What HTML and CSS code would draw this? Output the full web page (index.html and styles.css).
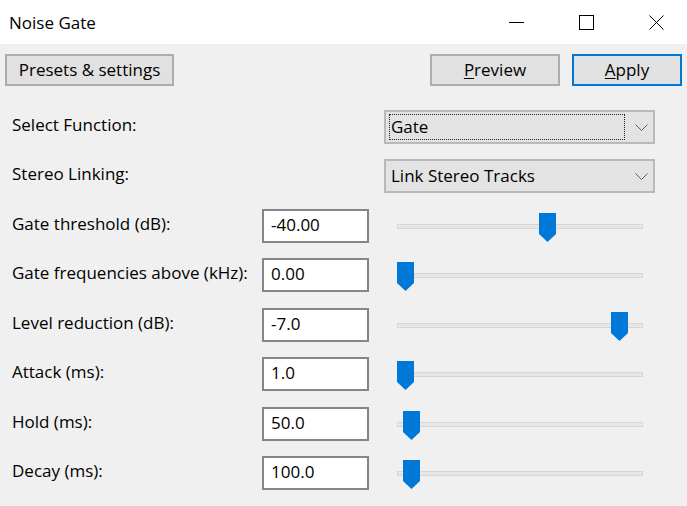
FILE: index.html
```html
<!DOCTYPE html>
<html lang="en">
<head>
<meta charset="utf-8">
<title>Noise Gate</title>
<link rel="stylesheet" href="styles.css">
</head>
<body>
<div class="window">
  <header class="titlebar">
    <span class="title">Noise Gate</span>
    <div class="caption">
      <svg class="cap-icon" width="15" height="15" viewBox="0 0 15 15"><line x1="0" y1="7.5" x2="15" y2="7.5" stroke="#000" stroke-width="1"/></svg>
      <svg class="cap-icon" width="15" height="15" viewBox="0 0 15 15"><rect x="0.5" y="0.5" width="14" height="14" fill="none" stroke="#000" stroke-width="1"/></svg>
      <svg class="cap-icon" width="15" height="15" viewBox="0 0 15 15"><path d="M0.5 0.5 L14.5 14.5 M14.5 0.5 L0.5 14.5" fill="none" stroke="#000" stroke-width="1"/></svg>
    </div>
  </header>

  <div class="toolbar">
    <div class="btn btn-presets">Presets &amp; settings</div>
    <div class="spacer"></div>
    <div class="btn btn-preview"><u>P</u>review</div>
    <div class="btn btn-apply"><u>A</u>pply</div>
  </div>

  <div class="form">
    <div class="lbl">Select Function:</div>
    <div class="combo">
      <span class="combo-value focused">Gate</span>
      <svg class="chev" width="13" height="7" viewBox="0 0 13 7"><polyline points="0.5,0.5 6.5,6.5 12.5,0.5" fill="none" stroke="#606060" stroke-width="1"/></svg>
    </div>

    <div class="lbl">Stereo Linking:</div>
    <div class="combo">
      <span class="combo-value">Link Stereo Tracks</span>
      <svg class="chev" width="13" height="7" viewBox="0 0 13 7"><polyline points="0.5,0.5 6.5,6.5 12.5,0.5" fill="none" stroke="#606060" stroke-width="1"/></svg>
    </div>

    <div class="lbl">Gate threshold (dB):</div>
    <div class="edit">-40.00</div>
    <div class="slider"><div class="track"></div><svg class="thumb" style="left:142px" width="17" height="29" viewBox="0 0 17 29"><path d="M0 0 H17 V21 L8.5 29 L0 21 Z" fill="#0078d7"/></svg></div>

    <div class="lbl">Gate frequencies above (kHz):</div>
    <div class="edit">0.00</div>
    <div class="slider"><div class="track"></div><svg class="thumb" style="left:0px" width="17" height="29" viewBox="0 0 17 29"><path d="M0 0 H17 V21 L8.5 29 L0 21 Z" fill="#0078d7"/></svg></div>

    <div class="lbl">Level reduction (dB):</div>
    <div class="edit">-7.0</div>
    <div class="slider"><div class="track"></div><svg class="thumb" style="left:214px" width="17" height="29" viewBox="0 0 17 29"><path d="M0 0 H17 V21 L8.5 29 L0 21 Z" fill="#0078d7"/></svg></div>

    <div class="lbl">Attack (ms):</div>
    <div class="edit">1.0</div>
    <div class="slider"><div class="track"></div><svg class="thumb" style="left:0px" width="17" height="29" viewBox="0 0 17 29"><path d="M0 0 H17 V21 L8.5 29 L0 21 Z" fill="#0078d7"/></svg></div>

    <div class="lbl">Hold (ms):</div>
    <div class="edit">50.0</div>
    <div class="slider"><div class="track"></div><svg class="thumb" style="left:6px" width="17" height="29" viewBox="0 0 17 29"><path d="M0 0 H17 V21 L8.5 29 L0 21 Z" fill="#0078d7"/></svg></div>

    <div class="lbl">Decay (ms):</div>
    <div class="edit">100.0</div>
    <div class="slider"><div class="track"></div><svg class="thumb" style="left:6px" width="17" height="29" viewBox="0 0 17 29"><path d="M0 0 H17 V21 L8.5 29 L0 21 Z" fill="#0078d7"/></svg></div>
  </div>
</div>
</body>
</html>
```

FILE: styles.css
```css
* { box-sizing: border-box; }

html, body {
  margin: 0;
  padding: 0;
  background: #f0f0f0;
}

body {
  font-family: "Open Sans", "Noto Sans", sans-serif;
  font-size: 17px;
  color: #000;
}

.window {
  width: 687px;
  height: 506px;
  overflow: hidden;
}

.titlebar {
  height: 44px;
  background: #fff;
  display: flex;
  align-items: center;
  justify-content: space-between;
  padding-left: 9px;
}

.title {
  line-height: 20px;
  padding-top: 1px;
}

.caption {
  display: flex;
  align-items: center;
  gap: 55px;
  padding-right: 23px;
}

.cap-icon {
  display: block;
}

.toolbar {
  display: flex;
  padding: 10px 5px 0 5px;
  gap: 12px;
}

.spacer { flex: 1; }

.btn {
  height: 32px;
  background: #e1e1e1;
  border: 2px solid #adadad;
  text-align: center;
  line-height: 27px;
  white-space: nowrap;
}

.btn u {
  text-decoration-thickness: 1px;
  text-underline-offset: 2px;
}

.btn-presets { width: 169px; }
.btn-preview { width: 130px; }
.btn-apply {
  width: 110px;
  border-color: #0078d7;
}

.form {
  display: grid;
  grid-template-columns: 250px 107px 1fr;
  grid-template-rows: repeat(8, 34px);
  row-gap: 15.43px;
  margin-top: 24px;
  padding-left: 12px;
}

.lbl {
  grid-column: 1;
  line-height: 30px;
  padding-bottom: 4px;
  white-space: nowrap;
}

.combo {
  grid-column: 3;
  margin-left: 15px;
  width: 271px;
  height: 34px;
  background: #e3e3e3;
  border: 2px solid #b9b9b9;
  padding: 2px 0 2px 3px;
  display: flex;
  align-items: center;
}

.combo-value {
  width: 236px;
  height: 26px;
  line-height: 23px;
  padding-left: 1px;
  border: 1px dotted transparent;
  white-space: nowrap;
}

.combo-value.focused {
  border-color: #222;
}

.chev {
  display: block;
  margin-left: 10px;
}

.edit {
  grid-column: 2;
  height: 34px;
  background: #fff;
  border: 2px solid #858585;
  padding-left: 7px;
  line-height: 28px;
  padding-bottom: 2px;
}

.slider {
  grid-column: 3;
  position: relative;
  margin-left: 28px;
  width: 246px;
  height: 34px;
  padding-top: 15px;
}

.track {
  height: 5px;
  background: #e7e7e7;
  border: 1px solid #d6d6d6;
}

.thumb {
  position: absolute;
  top: 4px;
  display: block;
}
```
